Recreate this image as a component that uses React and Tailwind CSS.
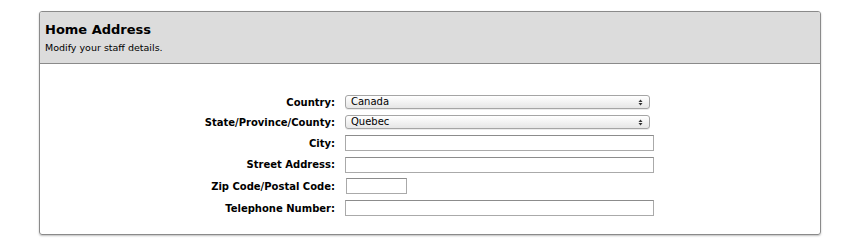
import React from "react";

function FakeSelect({ value }) {
  return (
    <div className="relative flex h-[14px] w-[305px] items-center rounded-[3px] border border-[#a5a5a5] bg-gradient-to-b from-[#ffffff] to-[#e6e6e6] pl-[5px] text-[10px] leading-none text-black shadow-[0_1px_0_rgba(0,0,0,0.08)]">
      <span>{value}</span>
      <svg className="absolute right-[6px] top-[3px]" width="5" height="7" viewBox="0 0 5 7">
        <path d="M0.5 3 L2.5 0.5 L4.5 3 Z" fill="#333" />
        <path d="M0.5 4 L2.5 6.5 L4.5 4 Z" fill="#333" />
      </svg>
    </div>
  );
}

function TextBox({ w }) {
  return (
    <div
      className={`h-[16px] border border-[#aaaaaa] border-t-[#8c8c8c] bg-white ${w}`}
    />
  );
}

const rows = [
  { label: "Country:", el: <FakeSelect value="Canada" />, h: "h-[20px]" },
  { label: "State/Province/County:", el: <FakeSelect value="Quebec" />, h: "h-[20px]" },
  { label: "City:", el: <TextBox w="w-[309px]" />, h: "h-[22px]" },
  { label: "Street Address:", el: <TextBox w="w-[309px]" />, h: "h-[21px]" },
  { label: "Zip Code/Postal Code:", el: <div className="pl-[1px]"><TextBox w="w-[61px]" /></div>, h: "h-[22px]" },
  { label: "Telephone Number:", el: <TextBox w="w-[309px]" />, h: "h-[22px]" },
];

export default function App() {
  return (
    <div
      className="h-[248px] w-[860px] bg-white pt-[11px] pl-[39px]"
      style={{ fontFamily: '"DejaVu Sans", Verdana, sans-serif' }}
    >
      <div className="h-[224px] w-[782px] overflow-hidden rounded-[3px] border border-[#8a8a8a] shadow-[0_1px_2px_rgba(0,0,0,0.25)]">
        <div className="h-[52px] border-b border-[#8a8a8a] bg-[#dcdcdc] pl-[5px] pt-[9px]">
          <div className="text-[13px] font-bold leading-[18px] text-black">Home Address</div>
          <div className="mt-[2px] text-[9.5px] leading-[14px] text-black">Modify your staff details.</div>
        </div>
        <div className="pt-[28px]">
          {rows.map((r) => (
            <div key={r.label} className={`flex items-center ${r.h}`}>
              <div className="w-[305px] pr-[10px] text-right text-[10px] font-bold text-black">
                {r.label}
              </div>
              {r.el}
            </div>
          ))}
        </div>
      </div>
    </div>
  );
}
